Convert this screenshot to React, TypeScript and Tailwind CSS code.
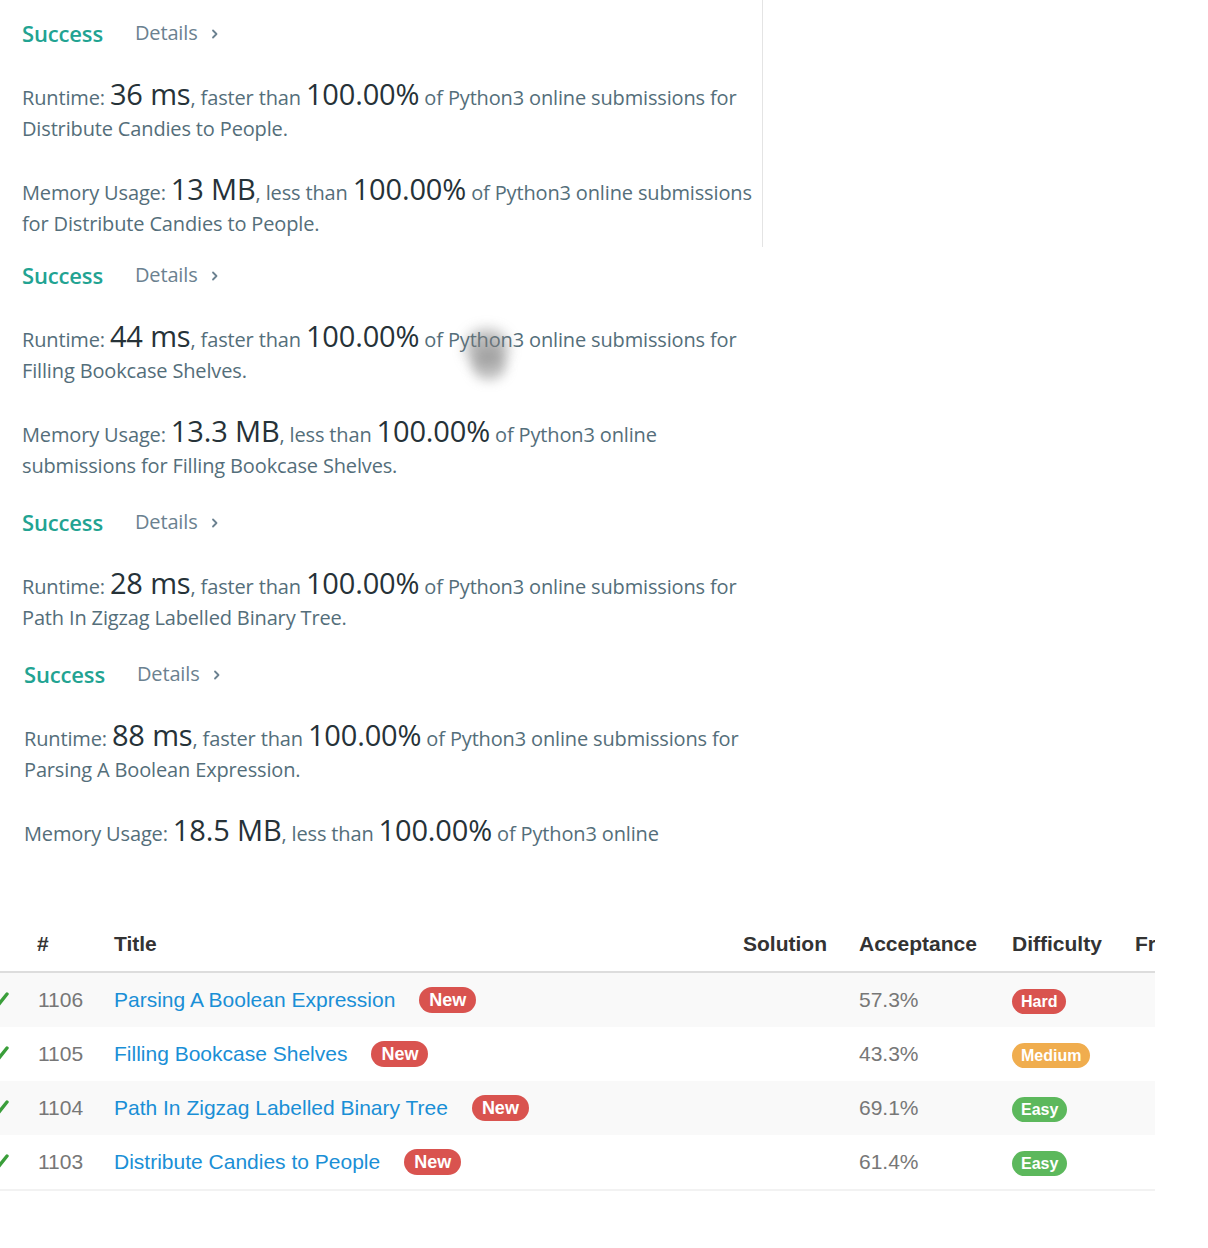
import React from "react";

type Stat = { label: string; value: string; mid: string; pct: string; tail: string; wrap: string };

type Block = {
	pad: string;
	stats: Stat[];
};

const blocks: Block[] = [
	{
		pad: "pl-[22px] pt-[5px] h-[247px] w-[763px] border-r border-[#e4e4e4]",
		stats: [
			{ label: "Runtime:", value: "36 ms", mid: ", faster than ", pct: "100.00%", tail: " of Python3 online submissions for", wrap: "Distribute Candies to People." },
			{ label: "Memory Usage:", value: "13 MB", mid: ", less than ", pct: "100.00%", tail: " of Python3 online submissions", wrap: "for Distribute Candies to People." },
		],
	},
	{
		pad: "pl-[22px]",
		stats: [
			{ label: "Runtime:", value: "44 ms", mid: ", faster than ", pct: "100.00%", tail: " of Python3 online submissions for", wrap: "Filling Bookcase Shelves." },
			{ label: "Memory Usage:", value: "13.3 MB", mid: ", less than ", pct: "100.00%", tail: " of Python3 online", wrap: "submissions for Filling Bookcase Shelves." },
		],
	},
	{
		pad: "pl-[22px] mt-[13px]",
		stats: [
			{ label: "Runtime:", value: "28 ms", mid: ", faster than ", pct: "100.00%", tail: " of Python3 online submissions for", wrap: "Path In Zigzag Labelled Binary Tree." },
		],
	},
	{
		pad: "pl-[24px] mt-[13px]",
		stats: [
			{ label: "Runtime:", value: "88 ms", mid: ", faster than ", pct: "100.00%", tail: " of Python3 online submissions for", wrap: "Parsing A Boolean Expression." },
			{ label: "Memory Usage:", value: "18.5 MB", mid: ", less than ", pct: "100.00%", tail: " of Python3 online", wrap: "" },
		],
	},
];

const problems = [
	{ id: 1106, title: "Parsing A Boolean Expression", acc: "57.3%", diff: "Hard" },
	{ id: 1105, title: "Filling Bookcase Shelves", acc: "43.3%", diff: "Medium" },
	{ id: 1104, title: "Path In Zigzag Labelled Binary Tree", acc: "69.1%", diff: "Easy" },
	{ id: 1103, title: "Distribute Candies to People", acc: "61.4%", diff: "Easy" },
];

const diffColor: Record<string, string> = {
	Hard: "bg-[#d9534f]",
	Medium: "bg-[#f0ad4e]",
	Easy: "bg-[#5cb85c]",
};

function ResultBlock({ block }: { block: Block }) {
	return (
		<div className={block.pad}>
			<div className="h-[56px] flex items-center">
				<span className="text-[22px] font-semibold text-[#22a392]">Success</span>
				<span className="ml-[32px] text-[20px] text-[#6b8190]">Details</span>
				<svg width="14" height="14" viewBox="0 0 14 14" className="ml-[10px] mt-[2px]">
					<path d="M5 3.5 L8.5 7 L5 10.5" fill="none" stroke="#6b8190" strokeWidth="1.8" strokeLinecap="round" strokeLinejoin="round" />
				</svg>
			</div>
			{block.stats.map((s, i) => (
				<p key={i} className={`text-[20px] leading-[31px] text-[#546e7a] ${i === 0 ? "mt-[21px]" : "mt-[33px]"}`}>
					{s.label} <span className="text-[29px] leading-[0] text-[#263238]">{s.value}</span>
					{s.mid}
					<span className="text-[29px] leading-[0] text-[#263238]">{s.pct}</span>
					{s.tail}
					{s.wrap && (
						<>
							<br />
							{s.wrap}
						</>
					)}
				</p>
			))}
		</div>
	);
}

export default function App() {
	return (
		<div className="relative w-[1208px] h-[1248px] bg-white overflow-hidden">
			<div className="font-['Open_Sans','Noto_Sans',sans-serif] tracking-[-0.15px]">
				{blocks.map((b, i) => (
					<ResultBlock key={i} block={b} />
				))}
			</div>

			{/* smudge over the second block */}
			<div className="absolute left-[466px] top-[330px] w-[42px] h-[36px] rounded-full bg-[#7a7a7a] opacity-55 blur-[7px]" />
			<div className="absolute left-[472px] top-[350px] w-[34px] h-[30px] rounded-full bg-[#888] opacity-50 blur-[6px]" />

			{/* problem table */}
			<div className="mt-[67px] w-[1155px] overflow-hidden font-['Liberation_Sans',Arial,sans-serif] text-[21px]">
				<div className="grid grid-cols-[37px_77px_629px_116px_153px_123px_1fr] h-[57px] items-center border-b-2 border-[#dddddd] font-bold text-[21px] text-[#333] whitespace-nowrap">
					<div />
					<div>#</div>
					<div>Title</div>
					<div>Solution</div>
					<div>Acceptance</div>
					<div>Difficulty</div>
					<div className="overflow-hidden">Fr</div>
				</div>
				{problems.map((p, i) => (
					<div
						key={p.id}
						className={`grid grid-cols-[37px_77px_629px_116px_153px_123px_1fr] h-[54px] items-center ${i % 2 === 0 ? "bg-[#f9f9f9]" : "bg-white"}`}
					>
						<div className="relative h-full">
							<svg width="16" height="14" viewBox="0 0 16 14" className="absolute left-[-7px] top-[19px]">
								<path d="M2 8 L6 12 L14 2" fill="none" stroke="#3a9e3a" strokeWidth="3.4" strokeLinecap="round" />
							</svg>
						</div>
						<div className="text-[#777] pl-[1px]">{p.id}</div>
						<div className="flex items-center">
							<span className="text-[#1a8fd6]">{p.title}</span>
							<span className="ml-[24px] h-[26px] px-[10px] rounded-full bg-[#d9534f] text-white font-bold text-[18px] leading-[26px]">New</span>
						</div>
						<div />
						<div className="text-[#777]">{p.acc}</div>
						<div>
							<span className={`inline-block h-[25px] px-[9px] rounded-full ${diffColor[p.diff]} text-white font-bold text-[16px] leading-[25px]`}>
								{p.diff}
							</span>
						</div>
						<div />
					</div>
				))}
				<div className="h-[2px] bg-[#f2f2f2]" />
			</div>
		</div>
	);
}
